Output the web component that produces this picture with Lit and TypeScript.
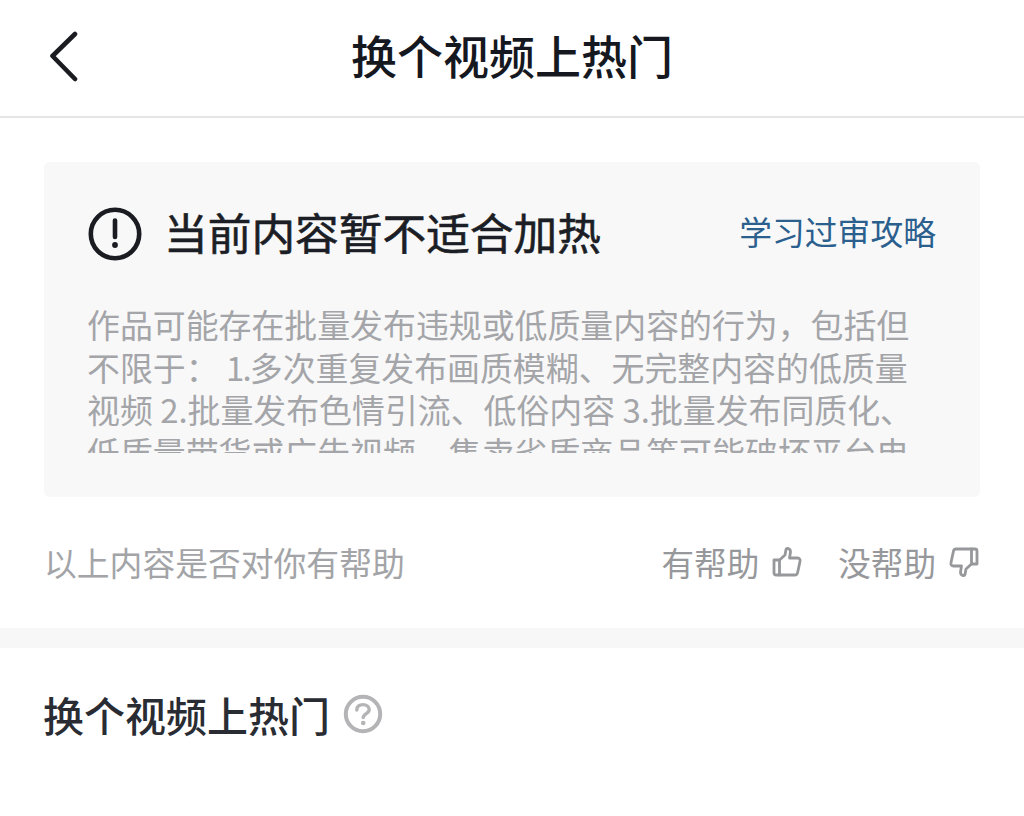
import { LitElement, html, css } from "lit";
import { customElement } from "lit/decorators.js";

@customElement("app-root")
export class AppRoot extends LitElement {
  static styles = css`
    :host {
      display: block;
      width: 1024px;
      height: 816px;
      overflow: hidden;
      background: #fff;
      font-family: "Noto Sans CJK SC", "Noto Sans", sans-serif;
    }
    .nav {
      height: 116px;
      border-bottom: 2px solid #e6e6e7;
      display: flex;
      align-items: center;
      justify-content: center;
      position: relative;
    }
    .back { position: absolute; left: 48px; top: 30px; width: 32px; height: 52px; }
    .nav-title { font-size: 46px; line-height: 60px; font-weight: 500; color: #16181f; margin-top: -8px; }
    .card {
      margin: 44px 44px 0;
      height: 335px;
      box-sizing: border-box;
      background: #f8f8f9;
      border-radius: 6px;
      padding: 41px 44px 0 43px;
    }
    .card-head { display: flex; align-items: center; height: 56px; }
    .warn { width: 54px; height: 54px; flex: none; margin: 6px 24px 0 1px; }
    .card-title { font-size: 43.7px; line-height: 56px; color: #1c1e25; font-weight: 400; -webkit-text-stroke: 0.6px #1c1e25; flex: 1; white-space: nowrap; margin: -1px 0 0 -2px; }
    .link { font-size: 32.8px; line-height: 44px; color: #2b5f8e; white-space: nowrap; }
    .body {
      margin-top: 44px;
      height: 150px;
      overflow: hidden;
      font-size: 32.9px;
      line-height: 42.5px;
      color: #a4a5a8;
      white-space: nowrap;
    }
    .num { letter-spacing: -1.8px; }
    .feedback {
      height: 131px;
      margin: 0 44px;
      display: flex;
      align-items: center;
      color: #97989b;
    }
    .q { font-size: 32.8px; line-height: 44px; flex: 1; color: #a3a4a7; white-space: nowrap; margin: -2px 0 0 0; }
    .opt { display: flex; align-items: center; font-size: 32.6px; line-height: 44px; white-space: nowrap; margin-top: -2px; }
    .opt + .opt { margin-left: 35px; }
    .opt svg { width: 32px; height: 34px; margin-left: 12px; }
    .band { height: 20px; background: #f7f7f8; }
    .section { display: flex; align-items: center; margin: 40px 44px 0; height: 52px; }
    .section-title { font-size: 41px; line-height: 52px; font-weight: 500; color: #2a2c33; white-space: nowrap; margin-left: -1px; }
    .help { width: 40px; height: 40px; margin-left: 13px; }
  `;

  render() {
    return html`
      <div class="nav">
        <svg class="back" viewBox="0 0 32 52" fill="none" stroke="#1a1c22" stroke-width="4.6" stroke-linecap="round" stroke-linejoin="round">
          <path d="M27 4 L4.5 26 L27 49" />
        </svg>
        <div class="nav-title">换个视频上热门</div>
      </div>
      <div class="card">
        <div class="card-head">
          <svg class="warn" viewBox="0 0 54 54" fill="none">
            <ellipse cx="27" cy="27" rx="24.2" ry="24.2" stroke="#1a1c22" stroke-width="4.6" />
            <path d="M27 13.5 V30" stroke="#1a1c22" stroke-width="4.6" stroke-linecap="round" />
            <circle cx="27" cy="38" r="2.9" fill="#1a1c22" />
          </svg>
          <div class="card-title">当前内容暂不适合加热</div>
          <div class="link">学习过审攻略</div>
        </div>
        <div class="body">
          作品可能存在批量发布违规或低质量内容的行为，包括但<br />
          不限于： <span class="num">1.</span>多次重复发布画质模糊、无完整内容的低质量<br />
          视频 2.批量发布色情引流、低俗内容 3.批量发布同质化、<br />
          低质量带货或广告视频、售卖劣质商品等可能破坏平台电
        </div>
      </div>
      <div class="feedback">
        <div class="q">以上内容是否对你有帮助</div>
        <div class="opt">
          有帮助
          <svg viewBox="0 0 32 34" fill="none" stroke="#97989b" stroke-width="2.8" stroke-linejoin="round" stroke-linecap="round">
            <path d="M3 15 H8.5 V30 H5 A2 2 0 0 1 3 28 Z" />
            <path d="M8.5 15 L14 10 L15 4.5 C15.5 3 19.5 3 19.5 7 L18.5 13 H26.5 C28.5 13 29.5 14.5 29 16.5 L26.5 28 C26.2 29.3 25.2 30 24 30 H8.5" />
          </svg>
        </div>
        <div class="opt">
          没帮助
          <svg viewBox="0 0 32 34" fill="none" stroke="#97989b" stroke-width="2.8" stroke-linejoin="round" stroke-linecap="round">
            <path d="M29 19 H23.5 V4 H27 A2 2 0 0 1 29 6 Z" />
            <path d="M23.5 19 L18 24 L17 29.5 C16.5 31 12.5 31 12.5 27 L13.5 21 H5.5 C3.5 21 2.5 19.5 3 17.5 L5.5 6 C5.8 4.7 6.8 4 8 4 H23.5" />
          </svg>
        </div>
      </div>
      <div class="band"></div>
      <div class="section">
        <div class="section-title">换个视频上热门</div>
        <svg class="help" viewBox="0 0 40 40" fill="none">
          <circle cx="20" cy="20" r="17.2" stroke="#b4b4b6" stroke-width="4" />
          <path d="M13.8 16 C13.8 12.4 16.6 10.6 20 10.6 C23.4 10.6 26.2 12.6 26.2 15.8 C26.2 19.4 20.2 19.8 20.2 23.6" stroke="#b4b4b6" stroke-width="3.4" stroke-linecap="round" />
          <circle cx="20.2" cy="29" r="2.3" fill="#b4b4b6" />
        </svg>
      </div>
    `;
  }
}
